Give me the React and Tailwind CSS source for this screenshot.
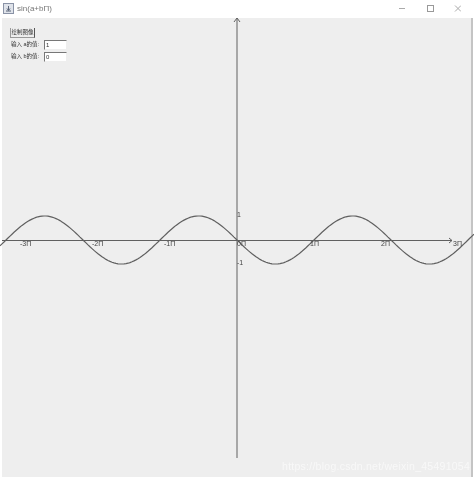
const LABELS = [
  { x: 20, y: 246, t: '-3Π' },
  { x: 92, y: 246, t: '-2Π' },
  { x: 164, y: 246, t: '-1Π' },
  { x: 237, y: 246, t: '0Π' },
  { x: 310, y: 246, t: '1Π' },
  { x: 381, y: 246, t: '2Π' },
  { x: 453, y: 246, t: '3Π' },
];

// curve is -sin, zero crossing at x=237, period 154px, amplitude 24px
const curve = () => {
  const pts = [];
  for (let x = 0; x <= 474; x += 2) {
    const y = 240 + 24 * Math.sin(((x - 237) / 154) * 2 * Math.PI);
    pts.push(`${x},${y.toFixed(1)}`);
  }
  return pts.join(' ');
};

function Field({ label, value }) {
  return (
    <div className="flex items-center h-[10px] mt-[2px]">
      <span className="w-[34px] pl-[1px] text-[5.5px] leading-none text-[#333] whitespace-nowrap">{label}</span>
      <div className="w-[23px] h-[10px] bg-white border border-t-[#777] border-l-[#777] border-r-[#eee] border-b-[#eee] text-[6px] leading-[8px] pl-[1px] text-[#333]">
        {value}
      </div>
    </div>
  );
}

export default function App() {
  return (
    <div className="relative w-[474px] h-[477px] bg-white overflow-hidden font-['Liberation_Sans','Noto_Sans_CJK_SC',sans-serif] blur-[0.4px]">
      {/* Title bar */}
      <div className="h-[18px] flex items-center pl-[3px] bg-white">
        <svg width="11" height="11" viewBox="0 0 11 11" className="mb-[1px]">
          <rect x="0.5" y="0.5" width="10" height="10" fill="#dfe3ea" stroke="#8a93a6" />
          <path d="M3 8h5M5.5 3v4M4 5.5l1.5 2 1.5-2" stroke="#5a6478" fill="none" />
        </svg>
        <span className="ml-[3px] text-[8px] text-[#777]">sin(a+bΠ)</span>
        <svg width="62" height="12" viewBox="0 0 62 12" className="ml-auto mr-[13px]">
          <path d="M0 5.5h6" stroke="#aaa" fill="none" />
          <rect x="28.5" y="2.5" width="6" height="6" stroke="#999" fill="none" />
          <path d="M56 2.5l6 6M62 2.5l-6 6" stroke="#aaa" fill="none" />
        </svg>
      </div>

      {/* Content pane */}
      <div className="relative ml-[2px] mr-[1px] h-[459px] bg-[#eeeeee] border-r-2 border-[#c4c4c4] pl-[8px] pt-[10px]">
        <div className="relative z-10 flex flex-col items-start">
          <button className="w-[25px] h-[10px] border-l border-r border-b border-l-[#999] border-r-[#555] border-b-[#999] text-[5.5px] leading-none text-[#333] whitespace-nowrap">
            绘制图像
          </button>
          <Field label="输入 a的值:" value="1" />
          <Field label="输入 b的值:" value="0" />
        </div>
      </div>

      {/* Plot drawn over the pane */}
      <svg width="474" height="477" viewBox="0 0 474 477" className="absolute inset-0">
        <g stroke="#606060" strokeWidth="1" fill="none">
          <path d="M2 240.5H452M449 238l3 2.5-3 2.5" />
          <path d="M237 18V458M234 22l3-4 3 4" />
        </g>
        <polyline points={curve()} stroke="#606060" strokeWidth="1.2" fill="none" />
        <g fill="#444" fontSize="7" fontFamily="Liberation Sans, sans-serif">
          {LABELS.map((l) => (
            <text key={l.t} x={l.x} y={l.y}>{l.t}</text>
          ))}
          <text x="237" y="217">1</text>
          <text x="237" y="265">-1</text>
        </g>
      </svg>

      {/* Watermark */}
      <div className="absolute right-[4px] bottom-[6px] text-[10.5px] leading-none text-white/60 tracking-[0.25px] whitespace-nowrap">
        https://blog.csdn.net/weixin_45491054
      </div>
    </div>
  );
}
